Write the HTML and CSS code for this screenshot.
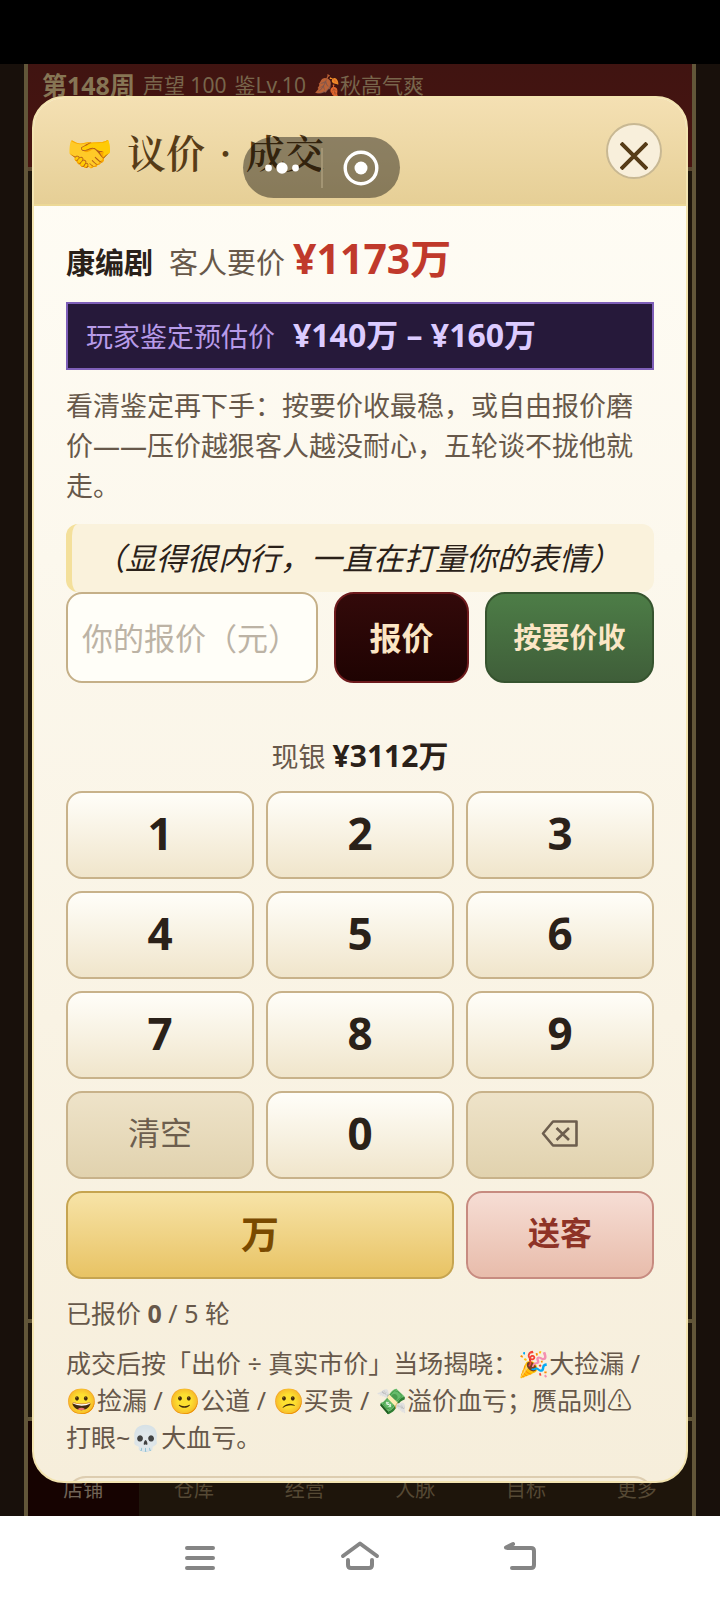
FILE: index.html
```html
<!DOCTYPE html>
<html lang="zh-CN">
<head>
<meta charset="utf-8">
<meta name="viewport" content="width=device-width, initial-scale=1">
<title>议价 · 成交</title>
<link rel="stylesheet" href="styles.css">
</head>
<body>
<div class="status-bar"></div>
<main class="stage">
  <div class="game">
    <header class="game-top">
      <strong class="week">第148周</strong>
      <span>声望 100</span>
      <span>鉴Lv.10</span>
      <span>🍂秋高气爽</span>
    </header>
    <div class="game-scene"></div>
    <div class="game-log"></div>
    <nav class="tabs">
      <a class="tab tab-active" href="#">店铺</a>
      <a class="tab" href="#">仓库</a>
      <a class="tab" href="#">经营</a>
      <a class="tab" href="#">人脉</a>
      <a class="tab" href="#">目标</a>
      <a class="tab" href="#">更多</a>
    </nav>
  </div>
  <div class="mask"></div>

  <section class="modal" role="dialog" aria-labelledby="modal-title">
    <header class="modal-head">
      <h1 class="modal-title" id="modal-title"><span class="emoji">🤝</span><span class="title-text"><span>议价</span><span>·</span><span>成交</span></span></h1>
      <button class="close" type="button" aria-label="关闭">
        <svg viewBox="0 0 28 28" width="28" height="28"><path d="M1 1 27 27M27 1 1 27" stroke="currentColor" stroke-width="4" fill="none"/></svg>
      </button>
    </header>
    <div class="modal-body">
      <p class="ask"><strong class="guest">康编剧</strong><span class="ask-label">客人要价</span><strong class="ask-price">¥1173万</strong></p>
      <p class="estimate"><span>玩家鉴定预估价</span><strong>¥140万 – ¥160万</strong></p>
      <p class="hint">看清鉴定再下手：按要价收最稳，或自由报价磨价——压价越狠客人越没耐心，五轮谈不拢他就走。</p>
      <p class="mood">（显得很内行，一直在打量你的表情）</p>
      <form class="offer">
        <input class="offer-input" type="text" placeholder="你的报价（元）" aria-label="你的报价（元）">
        <button class="btn btn-offer" type="button">报价</button>
        <button class="btn btn-accept" type="button">按要价收</button>
      </form>
      <p class="cash">现银 <strong>¥3112万</strong></p>
      <div class="keypad">
        <button class="key" type="button">1</button>
        <button class="key" type="button">2</button>
        <button class="key" type="button">3</button>
        <button class="key" type="button">4</button>
        <button class="key" type="button">5</button>
        <button class="key" type="button">6</button>
        <button class="key" type="button">7</button>
        <button class="key" type="button">8</button>
        <button class="key" type="button">9</button>
        <button class="key key-tool" type="button">清空</button>
        <button class="key" type="button">0</button>
        <button class="key key-tool" type="button" aria-label="退格">
          <svg viewBox="0 0 38 28" width="38" height="28" fill="none" stroke="currentColor" stroke-width="2.6" stroke-linejoin="round"><path d="M12 2.500H35.500V26.500H12L2 14.500ZM15.500 9 28 21M28 9 15.500 21"/></svg>
        </button>
        <button class="key key-wan" type="button">万</button>
        <button class="key key-leave" type="button">送客</button>
      </div>
      <p class="rounds">已报价 <strong>0</strong> / 5 轮</p>
      <p class="rules">成交后按「出价 ÷ 真实市价」当场揭晓：🎉大捡漏 / 😀捡漏 / 🙂公道 / 😕买贵 / 💸溢价血亏；赝品则⚠打眼~💀大血亏。</p>
      <div class="next-panel"></div>
    </div>
  </section>

  <div class="capsule">
    <button class="capsule-btn" type="button" aria-label="更多操作">
      <svg viewBox="0 0 36 36" width="36" height="36" fill="#fff"><circle cx="4.500" cy="18" r="3.400"/><circle cx="18" cy="18" r="5.700"/><circle cx="31.500" cy="18" r="3.400"/></svg>
    </button>
    <span class="capsule-line"></span>
    <button class="capsule-btn" type="button" aria-label="退出">
      <svg viewBox="0 0 36 36" width="36" height="36"><circle cx="18" cy="18" r="15.800" fill="none" stroke="#fff" stroke-width="3.400"/><circle cx="18" cy="18" r="6.500" fill="#fff"/></svg>
    </button>
  </div>
</main>
<nav class="system-nav">
  <button class="sys" type="button" aria-label="最近任务"><svg viewBox="0 0 40 32" width="40" height="32"><path d="M7 6H33M7 16H33M7 26H33"/></svg></button>
  <button class="sys" type="button" aria-label="主页"><svg viewBox="0 0 40 32" width="40" height="32"><path d="M3 14 20 1.500 37 14M8 18V23Q8 26 11 26H29Q32 26 32 23V18"/></svg></button>
  <button class="sys" type="button" aria-label="返回"><svg viewBox="0 0 40 32" width="40" height="32"><path d="M13 2 6 5.500 8 6H31Q34 6 34 9V23Q34 26 31 26H12"/></svg></button>
</nav>
</body>
</html>
```

FILE: styles.css
```css
* { box-sizing: border-box; }

body {
  margin: 0;
  min-height: 100vh;
  display: flex;
  flex-direction: column;
  background: #000;
  color: #2a2119;
  font-family: "Noto Sans", "Noto Sans CJK SC", sans-serif;
}

p, h1 { margin: 0; }
button, input { font: inherit; }
button { padding: 0; cursor: pointer; }
svg { display: block; }

.status-bar { height: 64px; background: #000; }

.stage {
  position: relative;
  flex: 1;
  display: flex;
  padding: 0 24px;
  background: #1a110c;
}

/* Game screen behind the dialog */
.game {
  flex: 1;
  display: flex;
  flex-direction: column;
  border: solid #675a3c;
  border-width: 0 4px;
  background: #20160c;
  color: #7d6a4f;
}
.game-top {
  height: 107px;
  padding: 6px 14px;
  display: flex;
  align-items: flex-start;
  gap: 8px;
  border-bottom: 4px solid #5f4a34;
  background: linear-gradient(#431512, #4c1511);
  font-size: 21px;
  line-height: 30px;
  white-space: nowrap;
}
.week { font-size: 25px; color: #8c7a58; }
.game-scene { flex: 1; border-bottom: 4px solid #675a3c; }
.game-log { height: 98px; border-bottom: 4px solid #675a3c; }
.tabs { height: 95px; display: flex; }
.tab {
  flex: 1;
  padding-top: 54px;
  text-align: center;
  font-size: 20px;
  line-height: 30px;
  color: #594c37;
  text-decoration: none;
}
.tab-active { background: #170402; color: #76685a; }
.mask { position: absolute; inset: 0; background: rgba(0, 0, 0, 0.04); }

/* Dialog */
.modal {
  position: absolute;
  inset: 32px 32px 33px;
  display: flex;
  flex-direction: column;
  overflow: hidden;
  border: 2px solid #f3e4b0;
  border-radius: 32px;
  background: linear-gradient(#fffdf6, #f6eedb);
}
.modal-head {
  flex: none;
  height: 108px;
  padding: 0 24px 0 32px;
  display: flex;
  align-items: center;
  justify-content: space-between;
  border-bottom: 2px solid #ecd896;
  background: linear-gradient(#f4e0b3, #e6cf96);
}
.modal-title {
  display: flex;
  align-items: center;
  gap: 14px;
  font-family: "Noto Serif CJK SC", "Liberation Serif", "Noto Sans CJK SC", serif;
  font-size: 39px;
  font-weight: 600;
  line-height: 56px;
  color: #573c17;
}
.title-text { display: flex; gap: 14px; }
.emoji { font-size: 38px; }
.close {
  width: 56px;
  height: 56px;
  padding-top: 10px;
  display: grid;
  place-items: center;
  border: 2px solid #c8b893;
  border-radius: 50%;
  background: #f8efdb;
  color: #573c17;
}

.modal-body {
  flex: 1;
  min-height: 0;
  padding: 24px 32px 0;
  display: flex;
  flex-direction: column;
  overflow: hidden;
}
.modal-body > * { flex: none; }

.ask { height: 56px; display: flex; align-items: baseline; line-height: 56px; font-size: 29px; }
.ask-label { margin: 0 8px 0 16px; color: #67584a; }
.ask-price { font-size: 41px; color: #c0392b; }

.estimate {
  height: 68px;
  margin-top: 16px;
  padding: 0 18px 2px;
  display: flex;
  align-items: center;
  gap: 18px;
  border: 2px solid #7e5fb8;
  background: #26193a;
  color: #b79be8;
  font-size: 27px;
}
.estimate strong { font-size: 32px; line-height: 48px; color: #dccbff; }

.hint { margin-top: 16px; font-size: 27px; line-height: 40px; color: #67584a; }

.mood {
  margin-top: 18px;
  padding: 0 22px;
  border-left: 6px solid #f4e09b;
  border-radius: 12px;
  background: #faf2dc;
  font-size: 31px;
  font-style: italic;
  line-height: 68px;
}

.offer { display: flex; gap: 16px; height: 91px; }
.offer-input {
  flex: 1;
  min-width: 0;
  padding: 0 14px;
  border: 2px solid #c5b088;
  border-radius: 16px;
  background: #fffef8;
  color: #2a2119;
  font-size: 31px;
}
.offer-input::placeholder { color: #bcb3a5; opacity: 1; }
.btn {
  padding-bottom: 4px;
  border: 2px solid;
  border-radius: 20px;
  color: #fbe6c5;
  font-weight: 700;
}
.btn-offer {
  width: 135px;
  border-color: #6d1a1c;
  background: linear-gradient(#330a0a, #1f0302);
  font-size: 32px;
}
.btn-accept {
  width: 169px;
  border-color: #36542f;
  background: linear-gradient(#4d7d47, #3f5e39);
  font-size: 28px;
}

.cash { margin-top: 53px; text-align: center; font-size: 27px; line-height: 40px; color: #67584a; }
.cash strong { font-size: 30px; color: #2a2119; }

.keypad {
  margin-top: 14px;
  display: grid;
  grid-template-columns: repeat(3, 1fr);
  grid-auto-rows: 88px;
  gap: 12px;
}
.key {
  padding-bottom: 4px;
  display: grid;
  place-items: center;
  border: 2px solid #c8b28a;
  border-radius: 16px;
  background: linear-gradient(#fffef9, #f0e5cb);
  color: #2a2119;
  font-size: 44px;
  font-weight: 700;
  line-height: 56px;
}
.key-tool {
  background: linear-gradient(#eee3c9, #e1d2ae);
  color: #6d5e4e;
  font-size: 32px;
  font-weight: 400;
}
.key-wan {
  grid-column: span 2;
  border-color: #c6a450;
  background: linear-gradient(#f7e3a7, #e8c364);
  color: #7a4a00;
  font-size: 38px;
}
.key-leave {
  border-color: #c78b80;
  background: linear-gradient(#f6ddd4, #e8bcab);
  color: #8e3326;
  font-size: 32px;
}

.rounds { margin-top: 16px; font-size: 25px; line-height: 36px; color: #67584a; }
.rules { margin-top: 14px; font-size: 25px; line-height: 37px; color: #67584a; }
.next-panel {
  height: 88px;
  margin-top: 20px;
  border: 2px solid #ddcdb0;
  border-radius: 20px;
}

/* Mini-program capsule over the title */
.capsule {
  position: absolute;
  top: 73px;
  left: 243px;
  width: 157px;
  height: 61px;
  display: flex;
  align-items: center;
  border-radius: 31px;
  background: rgba(0, 0, 0, 0.41);
}
.capsule-btn {
  flex: 1;
  display: grid;
  place-items: center;
  border: 0;
  background: none;
}
.capsule-line { width: 2px; height: 40px; background: #a39574; }

.system-nav {
  height: 84px;
  padding: 0 120px;
  display: flex;
  background: #fff;
}
.sys {
  flex: 1;
  display: grid;
  place-items: center;
  border: 0;
  background: none;
}
.sys svg {
  overflow: visible;
  fill: none;
  stroke: #858585;
  stroke-width: 4;
  stroke-linecap: round;
  stroke-linejoin: round;
}
```
